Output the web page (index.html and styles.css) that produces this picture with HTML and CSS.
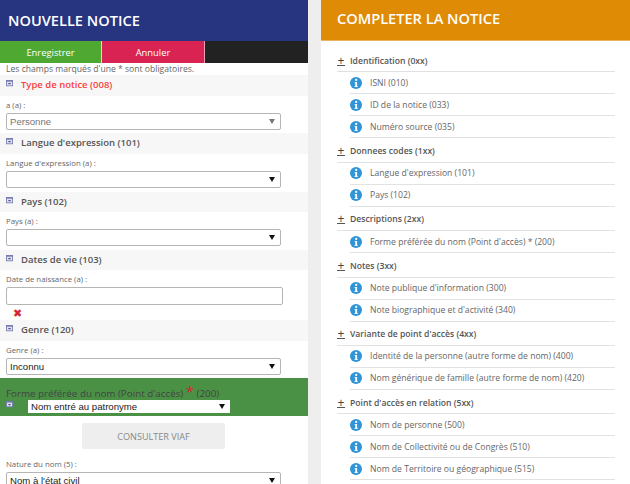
FILE: index.html
```html
<!DOCTYPE html>
<html lang="fr">
<head>
<meta charset="utf-8">
<title>Nouvelle notice</title>
<link rel="stylesheet" href="styles.css">
</head>
<body>
<svg class="defs" width="0" height="0" aria-hidden="true">
  <symbol id="toggle" viewBox="0 0 9 9">
    <rect x="0.5" y="0.5" width="8" height="7" fill="#dfe0ee" stroke="#6f75a8"/>
    <rect x="0.5" y="0.5" width="8" height="1.6" fill="#6f75a8"/>
    <rect x="3" y="4" width="3" height="1.4" fill="#3b4288"/>
  </symbol>
  <symbol id="info" viewBox="0 0 12 12">
    <circle cx="6" cy="6" r="6" fill="#2f95d8"/>
    <circle cx="6.2" cy="2.9" r="1.1" fill="#fff"/>
    <path d="M4.7 5h2.4v4.2h0.8v0.9H4.4V9.2h0.9V5.9h-0.6z" fill="#fff"/>
  </symbol>
</svg>
<div class="page">
  <section class="left">
    <h1 class="title title-left">NOUVELLE NOTICE</h1>
    <div class="actions">
      <button class="act act-save">Enregistrer</button>
      <button class="act act-cancel">Annuler</button>
      <div class="act-fill"></div>
    </div>
    <p class="note">Les champs marqués d'une * sont obligatoires.</p>

    <div class="sec-head"><svg class="toggle"><use href="#toggle"/></svg><span class="sec-title sec-red">Type de notice (008)</span></div>
    <div class="field">
      <label class="lbl">a (a) :</label>
      <div class="sel sel-off">Personne<span class="caret caret-off"></span></div>
    </div>

    <div class="sec-head"><svg class="toggle"><use href="#toggle"/></svg><span class="sec-title">Langue d'expression (101)</span></div>
    <div class="field">
      <label class="lbl">Langue d'expression (a) :</label>
      <div class="sel"><span class="caret"></span></div>
    </div>

    <div class="sec-head"><svg class="toggle"><use href="#toggle"/></svg><span class="sec-title">Pays (102)</span></div>
    <div class="field">
      <label class="lbl">Pays (a) :</label>
      <div class="sel"><span class="caret"></span></div>
    </div>

    <div class="sec-head"><svg class="toggle"><use href="#toggle"/></svg><span class="sec-title">Dates de vie (103)</span></div>
    <div class="field field-date">
      <label class="lbl">Date de naissance (a) :</label>
      <div class="inp"></div>
      <div class="del">✖</div>
    </div>

    <div class="sec-head"><svg class="toggle"><use href="#toggle"/></svg><span class="sec-title">Genre (120)</span></div>
    <div class="field field-genre">
      <label class="lbl">Genre (a) :</label>
      <div class="sel">Inconnu<span class="caret"></span></div>
    </div>

    <div class="band">
      <div class="band-title">Forme préférée du nom (Point d'accès) <span class="star">*</span> (200)</div>
      <div class="band-row">
        <svg class="toggle"><use href="#toggle"/></svg>
        <div class="mini-sel">Nom entré au patronyme<span class="caret"></span></div>
      </div>
    </div>
    <div class="viaf-wrap"><button class="viaf">CONSULTER VIAF</button></div>
    <div class="field field-last">
      <label class="lbl">Nature du nom (5) :</label>
      <div class="sel">Nom à l'état civil<span class="caret"></span></div>
    </div>
  </section>

  <section class="right">
    <h1 class="title title-right">COMPLETER LA NOTICE</h1>
    <div class="tree">
      <div class="grp"><span class="plus">+</span>Identification (0xx)</div>
      <div class="itm"><svg class="info"><use href="#info"/></svg>ISNI (010)</div>
      <div class="itm"><svg class="info"><use href="#info"/></svg>ID de la notice (033)</div>
      <div class="itm"><svg class="info"><use href="#info"/></svg>Numéro source (035)</div>
      <div class="grp"><span class="plus">+</span>Donnees codes (1xx)</div>
      <div class="itm"><svg class="info"><use href="#info"/></svg>Langue d'expression (101)</div>
      <div class="itm"><svg class="info"><use href="#info"/></svg>Pays (102)</div>
      <div class="grp"><span class="plus">+</span>Descriptions (2xx)</div>
      <div class="itm"><svg class="info"><use href="#info"/></svg>Forme préférée du nom (Point d'accès) * (200)</div>
      <div class="grp"><span class="plus">+</span>Notes (3xx)</div>
      <div class="itm"><svg class="info"><use href="#info"/></svg>Note publique d'information (300)</div>
      <div class="itm"><svg class="info"><use href="#info"/></svg>Note biographique et d'activité (340)</div>
      <div class="grp"><span class="plus">+</span>Variante de point d'accès (4xx)</div>
      <div class="itm"><svg class="info"><use href="#info"/></svg>Identité de la personne (autre forme de nom) (400)</div>
      <div class="itm"><svg class="info"><use href="#info"/></svg>Nom générique de famille (autre forme de nom) (420)</div>
      <div class="grp"><span class="plus">+</span>Point d'accès en relation (5xx)</div>
      <div class="itm"><svg class="info"><use href="#info"/></svg>Nom de personne (500)</div>
      <div class="itm"><svg class="info"><use href="#info"/></svg>Nom de Collectivité ou de Congrès (510)</div>
      <div class="itm"><svg class="info"><use href="#info"/></svg>Nom de Territoire ou géographique (515)</div>
    </div>
  </section>
</div>
</body>
</html>
```
FILE: styles.css
```css
* { box-sizing: border-box; }
html, body { margin: 0; height: 484px; overflow: hidden; }
body { background: #eeeeee; font-family: "Open Sans", sans-serif; color: #555; }
.defs { position: absolute; }
.page { display: flex; justify-content: space-between; height: 484px; overflow: hidden; }
.left { width: 308px; background: #fff; height: 484px; overflow: hidden; }
.right { width: 309px; background: #fff; height: 484px; overflow: hidden; }
.title { margin: 0; height: 41px; color: #fff; font-size: 14.6px; font-weight: 600; line-height: 41px; }
.title-left { background: #27347f; padding-left: 8px; }
.title-right { background: #e08b05; padding-left: 16px; line-height: 36px; border-bottom: 1px solid #e9b563; }
.actions { display: flex; height: 22px; background: #222; }
.act { border: 0; padding: 0; font: 400 9.4px "Open Sans", sans-serif; color: #fff; height: 22px; }
.act-save { width: 102px; background: #4ea831; border-right: 1px solid #cfe3c8; }
.act-cancel { width: 103px; background: #d92353; border-right: 1px solid #e8a0b4; }
.act-fill { flex: 1; }
.note { margin: 0; height: 12px; padding-left: 6px; font-size: 8.6px; line-height: 12px; color: #666; }
.sec-head { display: flex; align-items: flex-start; height: 20.5px; background: #f7f7f7; padding-left: 6px; }
.toggle { width: 7px; height: 7px; margin-top: 5px; flex: none; }
.sec-title { margin-left: 8px; font-size: 9.5px; font-weight: 600; line-height: 20px; color: #555; }
.sec-red { color: #fa4040; }
.field { height: 37.8px; padding: 3px 6px 0; }
.field-genre { height: 37px; }
.field-date { height: 50px; }
.field-last { height: 60px; padding-top: 9px; }
.lbl { display: block; font-size: 7.8px; line-height: 13px; color: #666; height: 13px; }
.sel { position: relative; width: 275px; height: 17px; margin-top: 1px; background: #fff; border: 1px solid #b5b5b5; border-radius: 2px; padding-left: 3px; font: 9.6px/15px "Liberation Sans", sans-serif; color: #222; }
.sel-off { color: #777; }
.caret { position: absolute; right: 5px; top: 5px; width: 0; height: 0; border-left: 3px solid transparent; border-right: 3px solid transparent; border-top: 5px solid #111; }
.caret-off { border-top-color: #777; }
.inp { width: 277px; height: 18px; margin-top: 1px; background: #fff; border: 1px solid #b5b5b5; border-radius: 2px; }
.del { color: #d9232e; font-size: 11px; line-height: 15px; padding-left: 7px; }
.band { height: 38px; background: #4a9145; padding: 8px 6px 0; }
.band-title { font-size: 9.8px; line-height: 13px; font-weight: 400; color: #444; height: 14px; white-space: nowrap; }
.star { color: #d9232e; font-size: 15px; line-height: 10px; }
.band-row { display: flex; align-items: flex-start; }
.band-row .toggle { margin-top: 1px; }
.mini-sel { position: relative; width: 202px; height: 13px; margin-left: 15px; background: #fff; font: 9.6px/13px "Liberation Sans", sans-serif; color: #222; padding-left: 3px; }
.mini-sel .caret { top: 4px; }
.viaf-wrap { padding: 7px 0 0 82px; height: 33px; }
.viaf { width: 143px; height: 26px; border: 0; border-radius: 2px; background: #eeeeee; font: 400 9.1px "Open Sans", sans-serif; color: #888; padding: 0; }
.tree { padding: 7px 15px 0 16px; }
.grp { display: flex; align-items: center; height: 24.4px; border-bottom: 1px solid #e2e2e2; font-size: 8.6px; font-weight: 600; color: #555; padding-top: 2px; }
.plus { font-size: 12px; font-weight: 400; line-height: 9px; height: 10px; border-bottom: 1px solid #555; width: 8px; margin-right: 5px; text-align: center; color: #444; }
.itm { display: flex; align-items: center; height: 22px; margin-left: 13px; border-bottom: 1px solid #e2e2e2; font-size: 8.6px; color: #666; white-space: nowrap; }
.info { width: 12px; height: 12px; margin-right: 8px; flex: none; }
```
